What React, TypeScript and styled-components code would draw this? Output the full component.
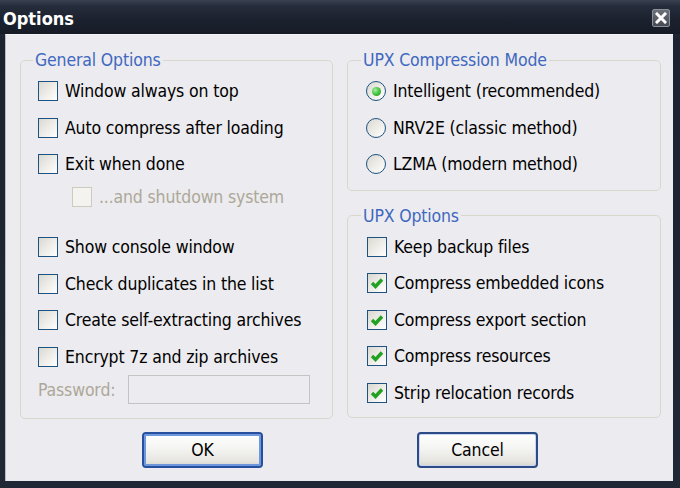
import React from "react";
import styled, { createGlobalStyle, css } from "styled-components";

const Global = createGlobalStyle`
  html, body { margin: 0; padding: 0; background: #1e2532; }
  body { width: 680px; height: 488px; overflow: hidden; }
  * { box-sizing: border-box; }
`;

const FONT = `"DejaVu Sans Condensed", "DejaVu Sans", "Liberation Sans", sans-serif`;

const Window = styled.div`
  width: 680px;
  height: 488px;
  display: flex;
  flex-direction: column;
  background: linear-gradient(#333b4b, #1c2230 40px, #202735);
  font-family: ${FONT};
  font-size: 17.5px;
  letter-spacing: -0.15px;
  color: #000;
`;

const TitleBar = styled.div`
  height: 34px;
  flex: none;
  display: flex;
  align-items: center;
  justify-content: space-between;
  padding: 2px 10px 0 3px;
  background: linear-gradient(#3a4252 0px, #252c3b 6px, #1b212e 20px, #161b26 34px);
`;

const Title = styled.div`
  color: #fff;
  font-weight: bold;
  font-size: 18px;
  letter-spacing: 0px;
`;

const CloseButton = styled.div`
  width: 18px;
  height: 18px;
  border-radius: 2px;
  border: 1px solid #8a8f98;
  background: linear-gradient(#6b7079, #454a54);
  display: flex;
  align-items: center;
  justify-content: center;
`;

const Body = styled.div`
  flex: 1;
  margin: 0 7px 7px 5px;
  background: #ecebef;
  border-left: 1px solid #b9bcc4;
  border-top: 1px solid #f6f6f8;
  padding: 15px 11px 0 14px;
  display: flex;
  flex-direction: column;
`;

const Columns = styled.div`
  display: grid;
  grid-template-columns: 313px 314px;
  column-gap: 14px;
`;

const RightColumn = styled.div`
  display: flex;
  flex-direction: column;
  gap: 15px;
`;

const Group = styled.fieldset<{ $padLeft: number; $padBottom: number }>`
  margin: 0;
  min-width: 0;
  border: 1px solid #d8d7cc;
  border-radius: 5px;
  padding: 3px 0 ${(p) => p.$padBottom}px ${(p) => p.$padLeft}px;
  display: flex;
  flex-direction: column;
`;

const Legend = styled.legend<{ $shift: number }>`
  color: #4068c0;
  padding: 0 2px;
  margin-left: ${(p) => p.$shift}px;
  line-height: 20px;
`;

const Row = styled.label<{ $indent?: number; $h?: number }>`
  display: flex;
  align-items: center;
  gap: 7px;
  height: ${(p) => p.$h ?? 36.5}px;
  margin-left: ${(p) => p.$indent ?? 0}px;
  white-space: nowrap;
`;

const Spacer = styled.div<{ $h: number }>`
  height: ${(p) => p.$h}px;
  flex: none;
`;

const Text = styled.span<{ $disabled?: boolean }>`
  color: ${(p) => (p.$disabled ? "#aca899" : "#000")};
  line-height: 20px;
`;

const Box = styled.span<{ $disabled?: boolean }>`
  width: 20px;
  height: 20px;
  flex: none;
  display: flex;
  align-items: center;
  justify-content: center;
  border: 1px solid #1d5281;
  background: linear-gradient(135deg, #d9d8d0 0%, #efeeea 55%, #ffffff 100%);
  ${(p) =>
    p.$disabled &&
    css`
      border-color: #cdcbbd;
      background: #f4f3f0;
    `}
`;

const RadioCircle = styled.span`
  width: 20px;
  height: 20px;
  flex: none;
  border-radius: 50%;
  border: 1px solid #1d5281;
  background: linear-gradient(135deg, #d9d8d0 0%, #efeeea 55%, #ffffff 100%);
  display: flex;
  align-items: center;
  justify-content: center;
`;

const RadioDot = styled.span`
  width: 9px;
  height: 9px;
  border-radius: 50%;
  background: radial-gradient(circle at 35% 35%, #a8f0a0 0%, #45c23f 50%, #22921f 100%);
`;

const PasswordRow = styled.div`
  display: flex;
  align-items: center;
  height: 29px;
`;

const PasswordLabel = styled.span`
  color: #aca899;
  width: 90px;
  line-height: 20px;
`;

const PasswordInput = styled.div`
  width: 182px;
  height: 29px;
  border: 1px solid #c3c3c3;
  background: #ecebef;
`;

const ButtonRow = styled.div`
  display: flex;
  margin-top: 13px;
  padding-left: 122px;
  gap: 154px;
`;

const Button = styled.div<{ $default?: boolean }>`
  width: 121px;
  height: 36px;
  border-radius: 4px;
  display: flex;
  align-items: center;
  justify-content: center;
  background: linear-gradient(#ffffff 0%, #f4f4f2 45%, #e6e5e0 85%, #d8d5cc 100%);
  border: 2px solid #2b4a86;
  box-shadow: inset 0 0 0 1px #c9d6ef;
  ${(p) =>
    p.$default &&
    css`
      border: 2px solid #26509f;
      box-shadow: inset 0 0 0 2px #6f97dc;
    `}
`;

const Check = () => (
  <svg width="16" height="16" viewBox="0 0 16 16">
    <path d="M3 8 L6.5 11.5 L13 4.5" fill="none" stroke="#21a121" strokeWidth="3.4" />
  </svg>
);

const Checkbox = ({ label, checked, disabled, indent, h }: { label: string; checked?: boolean; disabled?: boolean; indent?: number; h?: number }) => (
  <Row $indent={indent} $h={h}>
    <Box $disabled={disabled}>{checked && <Check />}</Box>
    <Text $disabled={disabled}>{label}</Text>
  </Row>
);

const Radio = ({ label, selected }: { label: string; selected?: boolean }) => (
  <Row>
    <RadioCircle>{selected && <RadioDot />}</RadioCircle>
    <Text>{label}</Text>
  </Row>
);

export default function App() {
  return (
    <>
      <Global />
      <Window>
        <TitleBar>
          <Title>Options</Title>
          <CloseButton>
            <svg width="12" height="12" viewBox="0 0 12 12">
              <path d="M2 2 L10 10 M10 2 L2 10" stroke="#fff" strokeWidth="3" strokeLinecap="square" />
            </svg>
          </CloseButton>
        </TitleBar>
        <Body>
          <Columns>
            <Group $padLeft={17} $padBottom={14}>
              <Legend $shift={-5}>General Options</Legend>
              <Checkbox label="Window always on top" />
              <Checkbox label="Auto compress after loading" />
              <Checkbox label="Exit when done" />
              <Checkbox label="...and shutdown system" disabled indent={34} h={28} />
              <Spacer $h={18.5} />
              <Checkbox label="Show console window" />
              <Checkbox label="Check duplicates in the list" />
              <Checkbox label="Create self-extracting archives" />
              <Checkbox label="Encrypt 7z and zip archives" />
              <PasswordRow>
                <PasswordLabel>Password:</PasswordLabel>
                <PasswordInput />
              </PasswordRow>
            </Group>
            <RightColumn>
              <Group $padLeft={18} $padBottom={7}>
                <Legend $shift={-5}>UPX Compression Mode</Legend>
                <Radio label="Intelligent (recommended)" selected />
                <Radio label="NRV2E (classic method)" />
                <Radio label="LZMA (modern method)" />
              </Group>
              <Group $padLeft={19} $padBottom={6}>
                <Legend $shift={-6}>UPX Options</Legend>
                <Checkbox label="Keep backup files" />
                <Checkbox label="Compress embedded icons" checked />
                <Checkbox label="Compress export section" checked />
                <Checkbox label="Compress resources" checked />
                <Checkbox label="Strip relocation records" checked />
              </Group>
            </RightColumn>
          </Columns>
          <ButtonRow>
            <Button $default>OK</Button>
            <Button>Cancel</Button>
          </ButtonRow>
        </Body>
      </Window>
    </>
  );
}
